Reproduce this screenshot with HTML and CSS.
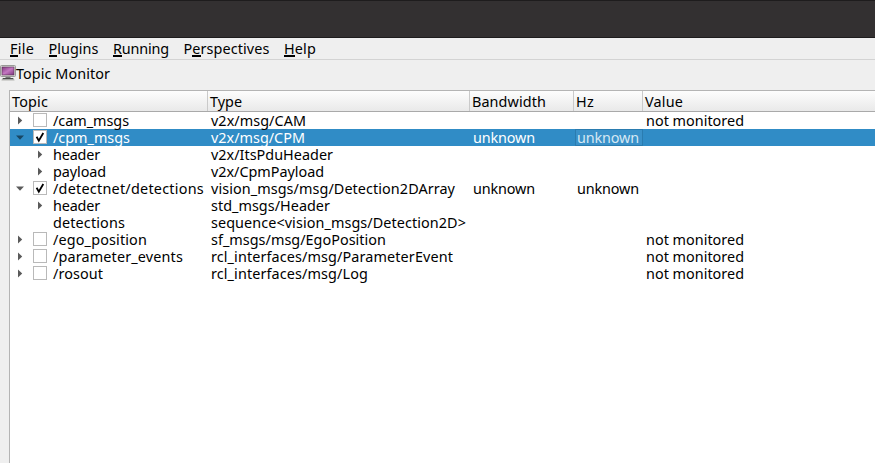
FILE: index.html
```html
<!DOCTYPE html>
<html lang="en">
<head>
<meta charset="utf-8">
<title>Topic Monitor</title>
<link rel="stylesheet" href="styles.css">
</head>
<body>
<div class="titlebar"></div>
<nav class="menubar">
  <span class="menu" data-w="24"><span class="key">F</span>ile</span>
  <span class="menu" data-w="50"><span class="key">P</span>lugins</span>
  <span class="menu" data-w="56"><span class="key">R</span>unning</span>
  <span class="menu" data-w="86">P<span class="key">e</span>rspectives</span>
  <span class="menu" data-w="32"><span class="key">H</span>elp</span>
</nav>
<div class="dock-title">
  <svg class="monitor" width="16" height="16" viewBox="0 0 16 16">
    <defs><linearGradient id="screen" x1="0" y1="0" x2="1" y2="1"><stop offset="0" stop-color="#82387f"/><stop offset=".5" stop-color="#c478c2"/><stop offset="1" stop-color="#7c347c"/></linearGradient></defs>
    <rect x=".5" y=".5" width="15" height="11" rx="1" fill="#dededb" stroke="#999a97"/>
    <rect x="2" y="2" width="12" height="8" fill="url(#screen)" stroke="#55304f" stroke-width=".6"/>
    <path d="M5.5 12h5v1h-5z" fill="#777"/>
    <path d="M3 13h10l1 1.5H2z" fill="#4a4c49"/><path d="M1.5 15h13" stroke="#b5b6b2"/>
  </svg>
  <span data-w="94">Topic Monitor</span>
</div>
<main class="tree">
  <div class="row head">
    <div class="cell"><span data-w="36">Topic</span></div>
    <div class="cell"><span data-w="32">Type</span></div>
    <div class="cell"><span data-w="74">Bandwidth</span></div>
    <div class="cell"><span data-w="18">Hz</span></div>
    <div class="cell"><span data-w="38">Value</span></div>
  </div>
  <div id="rows"></div>
</main>
<script src="tree.js"></script>
</body>
</html>
```
FILE: styles.css
```css
* { box-sizing: border-box; }
body {
  margin: 0;
  height: 463px;
  overflow: hidden;
  display: flex;
  flex-direction: column;
  background: #efefef;
  color: #000;
  font: 14.4px/17px "Noto Sans", "Open Sans", sans-serif;
  white-space: nowrap;
}
[data-w] { display: inline-block; }
.titlebar {
  height: 38px;
  flex: none;
  background: #333031;
  border-top: 1px solid #1e1c1d;
  border-bottom: 1px solid #1e1c1d;
}
.menubar {
  height: 22px;
  flex: none;
  display: flex;
  gap: 14.5px;
  padding: 2px 0 0 10px;
  border-bottom: 1px solid #d3d3d3;
}
.key { display: inline-block; height: 17px; border-bottom: 2px solid #000; }
.dock-title { height: 30px; flex: none; display: flex; padding-top: 5px; }
.monitor { flex: none; }
.tree {
  flex: 1;
  margin-left: 9px;
  background: #fff;
  border-left: 1px solid #b4b4b4;
  border-top: 1px solid #b4b4b4;
}
.row { display: grid; grid-template-columns: 198px 262px 104px 69px 1fr; height: 17px; }
.row .cell { padding-left: 3px; display: flex; }
.row.head {
  height: 21px;
  background: linear-gradient(#fdfdfd, #e9e9e9);
  border-bottom: 1px solid #a9a9a9;
}
.head .cell { padding: 2px 0 0 2px; border-right: 1px solid #cacaca; }
.head .cell:last-child { border-right: 0; }
.selected { background: #308cc6; color: #fff; }
.selected .focus { background: #3a91c9; color: #d6e8f4; box-shadow: inset 0 0 0 1px #2a7cb0; margin-left: 1px; padding-left: 2px; }
.slot { width: 20px; height: 17px; flex: none; }
.slot svg { display: block; }
.row .topic { padding-left: 0; }
.check {
  width: 14px;
  height: 14px;
  flex: none;
  margin: 1px 6px 0 3px;
  background: #fff;
  border: 1px solid #b9b9b9;
}
.check svg { display: block; }
.leaf { padding-left: 3px; }
```
FILE: tree.js
```js
// Each row: level, arrow, checked, [topic, width], [type, width], rate, value
const data = [
  [0, 'right', false, ['/cam_msgs', 76], ['v2x/msg/CAM', 95], '', 'not monitored'],
  [0, 'down', true, ['/cpm_msgs', 77], ['v2x/msg/CPM', 94], 'unknown', '', true],
  [1, 'right', null, ['header', 47], ['v2x/ItsPduHeader', 122], '', ''],
  [1, 'right', null, ['payload', 53], ['v2x/CpmPayload', 113], '', ''],
  [0, 'down', true, ['/detectnet/detections', 151], ['vision_msgs/msg/Detection2DArray', 244], 'unknown', ''],
  [1, 'right', null, ['header', 47], ['std_msgs/Header', 119], '', ''],
  [1, '', null, ['detections', 72], ['sequence<vision_msgs/Detection2D>', 255], '', ''],
  [0, 'right', false, ['/ego_position', 94], ['sf_msgs/msg/EgoPosition', 175], '', 'not monitored'],
  [0, 'right', false, ['/parameter_events', 130], ['rcl_interfaces/msg/ParameterEvent', 242], '', 'not monitored'],
  [0, 'right', false, ['/rosout', 50], ['rcl_interfaces/msg/Log', 157], '', 'not monitored']
];
const arrows = {
  right: '<path d="M8 4.5v8l4.2-4z"/>',
  down: '<path d="M6 6.5h8l-4 4.2z"/>'
};
function add(parent, cls, text, width) {
  const el = document.createElement(width ? 'span' : 'div');
  el.className = cls;
  if (text) el.textContent = text;
  if (width) el.dataset.w = width;
  parent.append(el);
  return el;
}
function slot(parent, arrow, selected) {
  const el = add(parent, 'slot');
  if (arrow) el.innerHTML = `<svg width="20" height="17" fill="${selected ? '#184663' : '#5a5a5a'}">${arrows[arrow]}</svg>`;
}
const rows = document.getElementById('rows');
for (const [level, arrow, checked, topic, type, rate, value, selected] of data) {
  const row = add(rows, 'row' + (selected ? ' selected' : ''));
  const first = add(row, 'cell topic');
  if (level) slot(first, '');
  slot(first, arrow, selected);
  if (!level) {
    const box = add(first, 'check');
    if (checked) box.innerHTML = '<svg width="12" height="12" fill="none" stroke="#000" stroke-width="1.8"><path d="M2.6 5.8 4.8 9.6 9.3 2"/></svg>';
  }
  add(first, level ? 'leaf' : '', topic[0], topic[1] + (level ? 3 : 0));
  add(add(row, 'cell'), '', type[0], type[1]);
  const bandwidth = add(row, 'cell');
  const hz = add(row, 'cell' + (selected ? ' focus' : ''));
  if (rate) { add(bandwidth, '', rate, 62); add(hz, '', rate, 62); }
  const last = add(row, 'cell');
  if (value) add(last, '', value, 98);
}
for (const el of document.querySelectorAll('[data-w]')) {
  const gap = (el.dataset.w - el.getBoundingClientRect().width) / el.textContent.length;
  el.style.letterSpacing = gap + 'px';
}
```
